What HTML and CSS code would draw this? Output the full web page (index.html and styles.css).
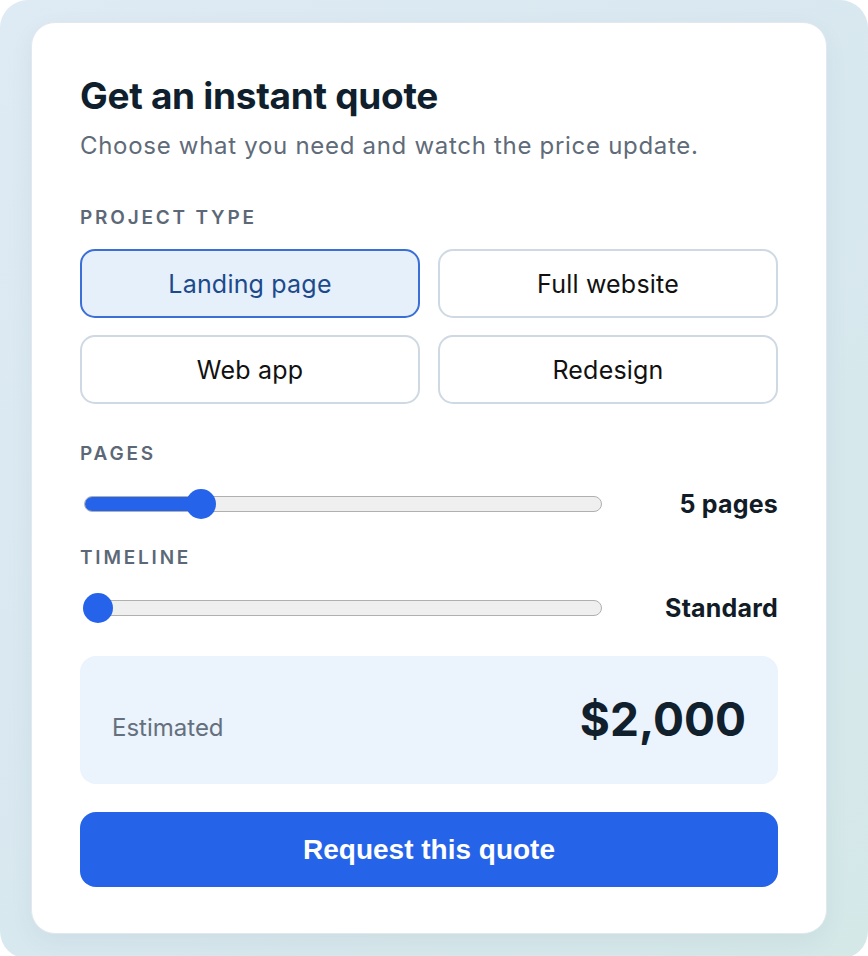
FILE: index.html
```html
<!DOCTYPE html>
<html lang="en">
<head>
<meta charset="UTF-8">
<meta name="viewport" content="width=device-width, initial-scale=1.0">
<title>Instant quote</title>
<link rel="stylesheet" href="styles.css">
</head>
<body>
<div class="backdrop">
  <div class="quote-card">
    <h1>Get an instant quote</h1>
    <p class="subtitle">Choose what you need and watch the price update.</p>

    <div class="field-label">Project type</div>
    <div class="options">
      <button class="option selected">Landing page</button>
      <button class="option">Full website</button>
      <button class="option">Web app</button>
      <button class="option">Redesign</button>
    </div>

    <div class="field-label spaced">Pages</div>
    <div class="slider-row">
      <div class="range" style="--value: 0.2105">
        <div class="range-track"><div class="range-fill"></div></div>
        <div class="range-thumb"></div>
      </div>
      <div class="slider-value">5 pages</div>
    </div>

    <div class="field-label">Timeline</div>
    <div class="slider-row">
      <div class="range" style="--value: 0">
        <div class="range-track"><div class="range-fill"></div></div>
        <div class="range-thumb"></div>
      </div>
      <div class="slider-value">Standard</div>
    </div>

    <div class="estimate">
      <span class="estimate-label">Estimated</span>
      <span class="estimate-price">$2,000</span>
    </div>

    <button class="request-btn">Request this quote</button>
  </div>
</div>
</body>
</html>
```

FILE: styles.css
```css
/* Page background */
body {
  margin: 0;
  background: #fff;
  font-family: Inter, "Noto Sans", sans-serif;
}

.backdrop {
  min-height: 956px;
  box-sizing: border-box;
  padding: 22px 41px 25px 31px;
  border-radius: 28px;
  background: linear-gradient(135deg, #deeaf4 0%, #d8e8ef 55%, #d5e8e8 100%);
}

/* Card */
.quote-card {
  background: #fff;
  border: 1px solid #e1e9ef;
  border-radius: 24px;
  box-shadow: 0 8px 24px rgba(30, 60, 90, 0.06);
  padding: 51px 48px 46px;
}

.quote-card h1 {
  margin: 0;
  font-size: 37px;
  line-height: 1.2;
  font-weight: 700;
  letter-spacing: -0.3px;
  color: #0f1f2d;
}

.subtitle {
  margin: 12px 0 0;
  font-size: 24px;
  line-height: 32px;
  letter-spacing: 0.7px;
  color: #5f6b79;
}

/* Section labels */
.field-label {
  margin-top: 26px;
  font-size: 19px;
  line-height: 24px;
  font-weight: 600;
  letter-spacing: 2.8px;
  text-transform: uppercase;
  color: #5d6877;
}

.subtitle + .field-label {
  margin-top: 44px;
}

.field-label.spaced {
  margin-top: 38px;
}

/* Project type options */
.options {
  display: grid;
  grid-template-columns: 1fr 1fr;
  column-gap: 18px;
  row-gap: 17px;
  margin-top: 19px;
}

.option {
  height: 69px;
  border: 2px solid #cfd9e3;
  border-radius: 15px;
  background: #fff;
  font-family: Inter, "Noto Sans", sans-serif;
  font-size: 25px;
  letter-spacing: 0.2px;
  color: #111;
  cursor: pointer;
}

.option.selected {
  border-color: #3a6fd8;
  background: #e6f0fb;
  color: #1d4a8b;
}

/* Sliders */
.slider-row {
  display: grid;
  grid-template-columns: 1fr 160px;
  column-gap: 16px;
  align-items: center;
  margin-top: 22px;
}

.range {
  position: relative;
  height: 32px;
  margin-left: 3px;
}

.range-track {
  position: absolute;
  left: 1px;
  right: 0;
  top: 8px;
  height: 16px;
  box-sizing: border-box;
  border: 1.5px solid #b0b0b0;
  border-radius: 8px;
  background: #efefef;
  overflow: hidden;
}

.range-fill {
  height: 100%;
  width: calc(var(--value) * (100% - 30px) + 15px);
  background: #2563eb;
}

.range-thumb {
  position: absolute;
  top: 1px;
  left: calc(var(--value) * (100% - 30px));
  width: 30px;
  height: 30px;
  border-radius: 50%;
  background: #2563eb;
}

.slider-value {
  text-align: right;
  font-size: 25px;
  font-weight: 700;
  letter-spacing: 0.2px;
  color: #111c27;
}

/* Estimate box */
.estimate {
  display: flex;
  justify-content: space-between;
  align-items: baseline;
  margin-top: 32px;
  padding: 40px 32px 42px;
  border-radius: 16px;
  background: #ebf3fc;
}

.estimate-label {
  font-size: 24px;
  color: #64707d;
}

.estimate-price {
  font-size: 46px;
  line-height: 46px;
  font-weight: 700;
  color: #10202d;
}

/* Submit */
.request-btn {
  display: block;
  width: 100%;
  height: 75px;
  margin-top: 28px;
  border: none;
  border-radius: 16px;
  background: #2563e9;
  color: #fff;
  font-family: "Liberation Sans", Arial, sans-serif;
  font-size: 28px;
  font-weight: 700;
  cursor: pointer;
}
```
